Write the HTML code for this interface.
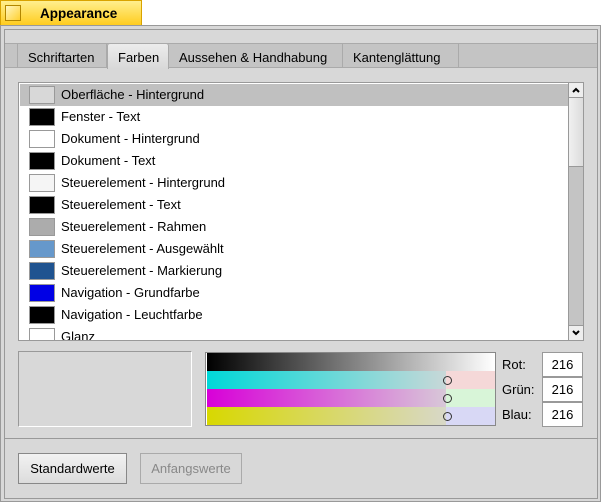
<!DOCTYPE html><html><head><style>
body{margin:0;width:601px;height:502px;background:#fff;font-family:"Liberation Sans",sans-serif;font-size:13px;color:#000;position:relative;overflow:hidden}
div{position:absolute;box-sizing:border-box}
.row{left:1px;width:548px;height:22px}
.sw{left:9px;top:2px;width:26px;height:18px;border:1px solid #999}
.lbl{left:41px;top:3px;white-space:nowrap}
.tab{top:44px;height:24px;border-right:1px solid #aaa;padding:6px 0 0 10px;white-space:nowrap}
.band{left:1px;width:288px;height:18px}
.knob{width:9px;height:9px;border:1px solid #333;border-radius:50%;left:236px;top:5px;background:transparent}
.fld{left:542px;width:41px;height:25px;background:#fff;border:1px solid #999;text-align:center;padding-top:4px}
.rl{left:502px}
</style></head><body>
<div style="left:0;top:0;width:142px;height:26px;background:linear-gradient(#ffef8f,#ffcb1a);border:1px solid #d9a300;border-bottom:none"></div>
<div style="left:5px;top:5px;width:16px;height:16px;border:1px solid #b28600;background:linear-gradient(135deg,#fff6c0,#ffd030)"></div>
<div style="left:40px;top:6px;font-weight:bold;font-size:13.5px">Appearance</div>
<div style="left:0;top:25px;width:601px;height:477px;background:#d8d8d8;border:1px solid #999"></div>
<div style="left:4px;top:29px;width:594px;height:470px;border:1px solid #999;background:#d8d8d8"></div>
<div style="left:5px;top:43px;width:592px;height:25px;background:#c4c4c4;border-top:1px solid #aaa;border-bottom:1px solid #aaa"></div>
<div style="left:17px;top:44px;width:1px;height:23px;background:#aaa"></div>
<div class="tab" style="left:18px;width:89px">Schriftarten</div>
<div class="tab" style="left:107px;top:43px;height:26px;width:62px;background:linear-gradient(#ececec,#d8d8d8);border:1px solid #aaa;border-bottom:none;border-radius:3px 3px 0 0;padding-top:6px">Farben</div>
<div class="tab" style="left:169px;width:174px">Aussehen &amp; Handhabung</div>
<div class="tab" style="left:343px;width:116px">Kantenglättung</div>
<div style="left:18px;top:82px;width:566px;height:259px;border:1px solid #999;background:#fff;overflow:hidden">
<div class="row" style="top:1px;background:#c0c0c0"><div class="sw" style="background:#d8d8d8"></div><div class="lbl">Oberfläche - Hintergrund</div></div>
<div class="row" style="top:23px"><div class="sw" style="background:#000"></div><div class="lbl">Fenster - Text</div></div>
<div class="row" style="top:45px"><div class="sw" style="background:#fff"></div><div class="lbl">Dokument - Hintergrund</div></div>
<div class="row" style="top:67px"><div class="sw" style="background:#000"></div><div class="lbl">Dokument - Text</div></div>
<div class="row" style="top:89px"><div class="sw" style="background:#f5f5f5"></div><div class="lbl">Steuerelement - Hintergrund</div></div>
<div class="row" style="top:111px"><div class="sw" style="background:#000"></div><div class="lbl">Steuerelement - Text</div></div>
<div class="row" style="top:133px"><div class="sw" style="background:#acacac"></div><div class="lbl">Steuerelement - Rahmen</div></div>
<div class="row" style="top:155px"><div class="sw" style="background:#6698cb"></div><div class="lbl">Steuerelement - Ausgewählt</div></div>
<div class="row" style="top:177px"><div class="sw" style="background:#1f5390"></div><div class="lbl">Steuerelement - Markierung</div></div>
<div class="row" style="top:199px"><div class="sw" style="background:#0000e5"></div><div class="lbl">Navigation - Grundfarbe</div></div>
<div class="row" style="top:221px"><div class="sw" style="background:#000"></div><div class="lbl">Navigation - Leuchtfarbe</div></div>
<div class="row" style="top:243px"><div class="sw" style="background:#fff"></div><div class="lbl">Glanz</div></div>
<div style="left:549px;top:0;width:15px;height:257px;background:#c4c4c4;border-left:1px solid #999"></div>
<div style="left:550px;top:0;width:14px;height:15px;background:#eee;border-bottom:1px solid #999"><svg width="14" height="14" style="position:absolute;left:0;top:0"><path d="M4 9 L7 6 L10 9" stroke="#000" stroke-width="2" fill="none"/></svg></div>
<div style="left:550px;top:15px;width:14px;height:69px;background:linear-gradient(90deg,#f0f0f0,#dcdcdc);border-bottom:1px solid #999"></div>
<div style="left:550px;top:242px;width:14px;height:15px;background:#eee;border-top:1px solid #999"><svg width="14" height="14" style="position:absolute;left:0;top:0"><path d="M4 5 L7 8 L10 5" stroke="#000" stroke-width="2" fill="none"/></svg></div>
</div>
<div style="left:18px;top:351px;width:174px;height:76px;border:1px solid #999;border-right-color:#fff;border-bottom-color:#fff;background:#d8d8d8"></div>
<div style="left:205px;top:352px;width:291px;height:74px;border:1px solid #888;background:#fff">
<div class="band" style="top:0;background:linear-gradient(90deg,#000,#fff)"></div>
<div class="band" style="top:18px;background:linear-gradient(90deg,#00d8d8 0%,#c8d8d8 83%,#f5d8d8 83%,#f5d8d8)"><div class="knob"></div></div>
<div class="band" style="top:36px;background:linear-gradient(90deg,#d800d8 0%,#d8c8d8 83%,#d8f5d8 83%,#d8f5d8)"><div class="knob"></div></div>
<div class="band" style="top:54px;height:18px;background:linear-gradient(90deg,#d8d800 0%,#d8d8c8 83%,#d8d8f5 83%,#d8d8f5)"><div class="knob"></div></div>
</div>
<div class="rl" style="top:357px">Rot:</div>
<div class="rl" style="top:382px">Grün:</div>
<div class="rl" style="top:407px">Blau:</div>
<div class="fld" style="top:352px">216</div>
<div class="fld" style="top:377px">216</div>
<div class="fld" style="top:402px">216</div>
<div style="left:5px;top:438px;width:592px;height:1px;background:#999"></div>
<div style="left:18px;top:453px;width:109px;height:31px;border:1px solid #888;background:linear-gradient(#f2f2f2,#dcdcdc);text-align:center;padding-top:7px">Standardwerte</div>
<div style="left:140px;top:453px;width:102px;height:31px;border:1px solid #aaa;background:#d8d8d8;color:#888;text-align:center;padding-top:7px">Anfangswerte</div>
</body></html>
